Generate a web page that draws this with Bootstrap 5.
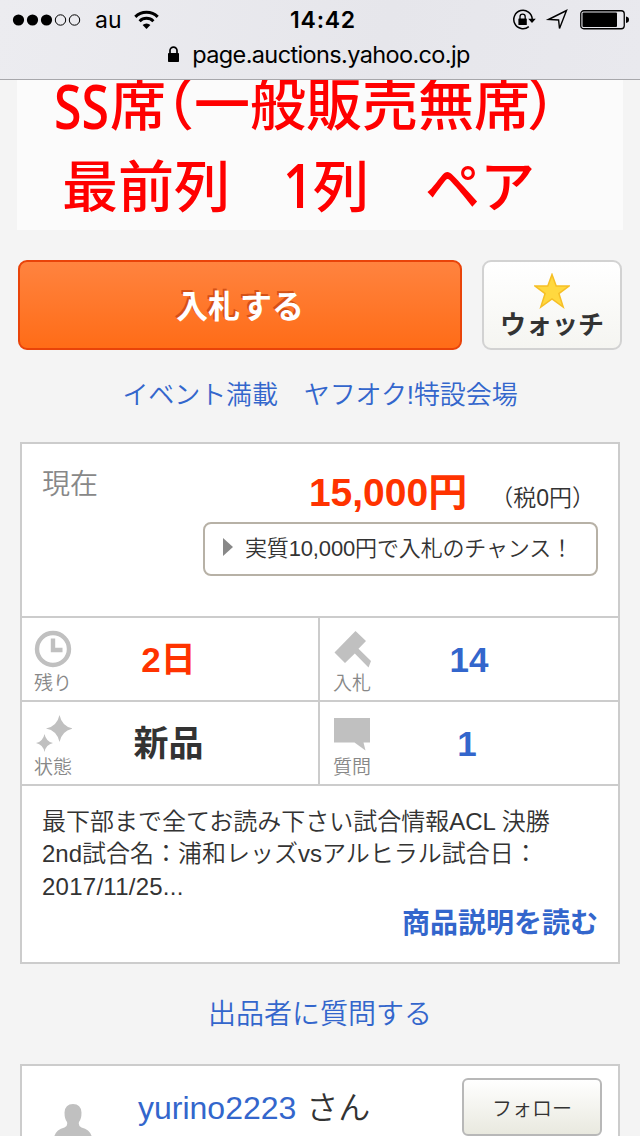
<!DOCTYPE html>
<html lang="ja">
<head>
<meta charset="utf-8">
<meta name="viewport" content="width=device-width, initial-scale=1">
<title>ヤフオク!</title>
<link href="https://cdn.jsdelivr.net/npm/bootstrap@5.3.0/dist/css/bootstrap.min.css" rel="stylesheet">
<style>
body{background:#f4f4f4;color:#333;font-family:"Liberation Sans","Noto Sans CJK JP",sans-serif;font-weight:350;height:1136px;overflow:hidden;line-height:1}
a{color:#36c;text-decoration:none}
svg{display:block}
.ios-bar{height:80px;background:linear-gradient(100deg,#ececf0,#e6e6eb 60%,#e9e9ee);border-bottom:1px solid #a7a7ab;color:#000;font-family:Inter,sans-serif;font-weight:400}
.ios-status{height:40px;padding:0 10px 0 12px}
.ios-side{flex:1 1 0}
.carrier{font-size:23px;margin:0 12px 0 13px;line-height:42px}
.clock{font-size:23px;font-weight:600;line-height:42px;letter-spacing:.75px;padding-left:4px}
.ios-url{height:39px;font-size:23.5px;line-height:30px;letter-spacing:-.63px;padding-right:5px}
.photo{margin:0 17px;height:150px;background:#fbfbfb}
.photo text{font-family:"Noto Sans CJK JP",sans-serif;font-weight:500;font-size:56px;fill:#f00}
.photo .latin{font-family:"Open Sans",sans-serif;font-weight:600;font-size:62px}
.actions{padding:30px 18px 0}
.bid-btn,.bid-btn:hover{width:444px;height:90px;border:2px solid #e94309;border-radius:9px;background:linear-gradient(#ff833f,#ff6c17);color:#fff;font-size:32px;font-weight:700;line-height:90px;padding:0;text-shadow:-2px -2px 0 #d45116}
.watch-btn{width:140px;height:90px;border:2px solid #d2d2d2;border-radius:9px;background:linear-gradient(#fff,#f5f5f1);color:#333;font-size:26px;font-weight:700;padding:11px 0 0;line-height:33px}
.event{font-size:26px;line-height:35px;letter-spacing:-.1px}
.ask{font-size:28px;line-height:32px}
.panel{margin:0 20px;border:2px solid #ccc;background:#fff}
.now{height:172px;padding:0 20px}
.now-label{font-size:28px;color:#888;padding-top:27px}
.price{font-size:39px;font-weight:700;color:#f30}
.tax{font-size:23px;margin:0 3px 0 23px}
.chance{width:395px;height:54px;border:2px solid #b7b1a6;border-radius:8px;font-size:22px;letter-spacing:-.15px;padding-left:18px}
.stats{border-top:2px solid #ccc}
.stat{height:84px;border-bottom:2px solid #ccc}
.stat-l{width:298px;border-right:2px solid #ccc}
.stat-r{width:298px}
.stat-icon{width:62px;margin-right:-62px;font-size:19px;color:#888;padding-top:12px}
.stat-r .stat-icon{width:64px;margin-right:-64px}
.stat-icon span{margin-top:6px}
.stat-val{font-size:35px;font-weight:700;line-height:83px}
.stat-l .stat-val{padding-right:3px}
.desc{height:176px;padding:20px 20px 0;font-size:24px;line-height:32.3px}
.more{font-size:28px;font-weight:700;line-height:42px}
.seller{height:100px;padding:0 16px}
.seller-name{font-size:32px;line-height:40px;padding:22px 0 0 30px}
.follow{width:140px;height:58px;margin-top:12px;border:2px solid #b8b8b8;border-radius:6px;background:linear-gradient(#fff,#e9e9df);font-size:20px;font-weight:350;color:#333;padding:3px 0 0}
</style>
</head>
<body>
<header class="ios-bar">
  <div class="ios-status d-flex align-items-center">
    <div class="ios-side d-flex align-items-center">
      <svg width="70" height="14" viewBox="0 0 70 14"><g><circle cx="6.5" cy="7" r="5.6"/><circle cx="20.5" cy="7" r="5.6"/><circle cx="34.5" cy="7" r="5.6"/></g><g fill="none" stroke="#000"><circle cx="48.5" cy="7" r="5.2"/><circle cx="62.5" cy="7" r="5.2"/></g></svg>
      <span class="carrier">au</span>
      <svg width="25" height="20" viewBox="0 0 25 20"><g fill="none" stroke="#000" stroke-width="3"><path d="M1.3 6.9a15.8 15.8 0 0 1 22.4 0"/><path d="M5.6 11.2a9.8 9.8 0 0 1 13.800 0"/></g><path d="M12.5 19 8.600 15a5.600 5.600 0 0 1 7.800 0z"/></svg>
    </div>
    <span class="clock">14:42</span>
    <div class="ios-side d-flex align-items-center justify-content-end">
      <svg width="24" height="22" viewBox="0 0 24 22"><path d="M16.8 17.6a9.2 9.2 0 1 1 3.4-7.6" fill="none" stroke="#000" stroke-width="1.5"/><path d="M16.2 9.8h7.6L20 14z"/><rect x="6.4" y="9.5" width="8.4" height="6.5" rx=".6"/><path d="M8 10V7.8a2.6 2.6 0 0 1 5.2 0V10" fill="none" stroke="#000" stroke-width="1.3"/></svg>
      <svg class="ms-2" width="28" height="22" viewBox="0 0 28 22"><path d="M4.500 10.500 22.500 1.500 15.500 19.500 14.600 11z" fill="none" stroke="#000" stroke-width="1.4"/></svg>
      <svg class="ms-1 ps-1" width="54" height="20" viewBox="0 0 50 20"><rect x=".75" y=".75" width="43.5" height="18" rx="3" fill="none" stroke="#000" stroke-width="1.3"/><rect x="2.5" y="2.5" width="34.5" height="14.5" rx="1"/><path d="M46 6.500q3 .5 3 3.200t-3 3.200z"/></svg>
    </div>
  </div>
  <div class="ios-url d-flex justify-content-center">
    <svg style="margin:6px 10px 0 0" width="17" height="17" viewBox="0 0 17 17"><rect x="3" y="7" width="11" height="9" rx=".8"/><path d="M5 8V4.600a3.500 3.500 0 0 1 7 0V8" fill="none" stroke="#000" stroke-width="1.700"/></svg>
    <span>page.auctions.yahoo.co.jp</span>
  </div>
</header>
<main>
  <div class="photo">
    <svg width="606" height="150" viewBox="17 80 606 150">
      <text class="latin" x="54" y="129" textLength="55" lengthAdjust="spacingAndGlyphs">SS</text>
      <text x="110" y="125">席</text>
      <text x="138" y="125">（</text>
      <text x="194" y="125">一般販売無席</text>
      <text x="527" y="125">）</text>
      <text x="62" y="206.500">最前列</text>
      <text class="latin" x="283" y="208" textLength="30" lengthAdjust="spacingAndGlyphs">1</text>
      <text x="313" y="206.500">列</text>
      <text x="425" y="206.500" textLength="110" lengthAdjust="spacingAndGlyphs">ペア</text>
    </svg>
  </div>
  <div class="actions d-flex justify-content-between">
    <button class="btn bid-btn">入札する</button>
    <button class="btn watch-btn d-flex flex-column align-items-center">
      <svg width="36" height="36" viewBox="0 0 36 36" class="flex-shrink-0"><path d="M18 1.500 22.200 13H35L24.900 20.600 29.200 34 18 26 6.800 34 11.100 20.600 1 13H13.800z" fill="#ffd83f" stroke="#f6bf26" stroke-width="1.500"/></svg>
      <span>ウォッチ</span>
    </button>
  </div>
  <div class="text-center event" style="margin-top:28px"><a href="#">イベント満載　ヤフオク!特設会場</a></div>
  <section class="panel" style="margin-top:29px">
    <div class="now d-flex justify-content-between">
      <div class="now-label">現在</div>
      <div class="d-flex flex-column align-items-end">
        <div class="d-flex align-items-baseline" style="height:78px;padding-top:29px"><span class="price">15,000円</span><span class="tax">（税0円）</span></div>
        <div class="chance d-flex align-items-center"><svg width="10" height="18" viewBox="0 0 10 18" style="margin:0 12px 4px 0"><path d="M0 0 10 9 0 18z" fill="#888"/></svg><span>実質10,000円で入札のチャンス！</span></div>
      </div>
    </div>
    <div class="stats d-flex flex-wrap">
      <div class="stat stat-l d-flex">
        <div class="stat-icon d-flex flex-column align-items-center"><svg width="38" height="38" viewBox="0 0 38 38"><circle cx="19" cy="19" r="16" fill="none" stroke="#c0c0c0" stroke-width="4.400"/><path d="M19 8.500V20h9.500" fill="none" stroke="#c0c0c0" stroke-width="4.400"/></svg><span>残り</span></div>
        <div class="stat-val flex-fill text-center" style="color:#f30">2日</div>
      </div>
      <div class="stat stat-r d-flex">
        <div class="stat-icon d-flex flex-column align-items-center"><svg width="38" height="38" viewBox="0 0 38 38"><path d="M22.500 1 33 11 25.500 18.700 38 31 35.500 37.500 21.800 23.500 12 33 1.500 22.500z" fill="#c0c0c0"/></svg><span>入札</span></div>
        <div class="stat-val flex-fill text-center"><a href="#">14</a></div>
      </div>
      <div class="stat stat-l d-flex">
        <div class="stat-icon d-flex flex-column align-items-center"><svg width="38" height="38" viewBox="0 0 38 38"><path d="M25.500 1Q28 12.500 39 14.500 28 16.500 25.500 28 23 16.500 12 14.500 23 12.500 25.500 1M10.500 20Q12 27.500 19 29 12 30.500 10.500 38 9 30.500 2 29 9 27.500 10.500 20" fill="#c0c0c0"/></svg><span>状態</span></div>
        <div class="stat-val flex-fill text-center">新品</div>
      </div>
      <div class="stat stat-r d-flex">
        <div class="stat-icon d-flex flex-column align-items-center"><svg width="38" height="38" viewBox="0 0 38 38"><path d="M1 4H37V28.500H30.500L32.500 36.500 21.500 28.500H1z" fill="#c0c0c0"/></svg><span>質問</span></div>
        <div class="stat-val flex-fill text-center pe-1"><a href="#">1</a></div>
      </div>
    </div>
    <div class="desc">
      <div>最下部まで全てお読み下さい試合情報ACL 決勝<br>2nd試合名：浦和レッズvsアルヒラル試合日：<br><span style="letter-spacing:.25px">2017/11/25...</span></div>
      <div class="more text-end"><a href="#">商品説明を読む</a></div>
    </div>
  </section>
  <div class="text-center ask" style="margin-top:35px"><a href="#">出品者に質問する</a></div>
  <section class="panel" style="margin-top:33px">
    <div class="seller d-flex">
      <svg width="70" height="70" viewBox="0 0 70 70" style="margin-top:36px"><path d="M15.500 40Q15.500 28 26.500 25.500 30 24 29 20 26.500 17 26.500 10.500 27 2 35 2t8.500 8.500q0 6.500-2.500 9.500-1 4 2.500 5.500Q54.500 28 54.500 40z" fill="#c0c0c0"/></svg>
      <div class="seller-name flex-fill"><a href="#">yurino2223</a><span style="margin-left:10px">さん</span></div>
      <button class="btn follow">フォロー</button>
    </div>
  </section>
</main>
<script src="https://cdn.jsdelivr.net/npm/bootstrap@5.3.0/dist/js/bootstrap.bundle.min.js"></script>
</body>
</html>
